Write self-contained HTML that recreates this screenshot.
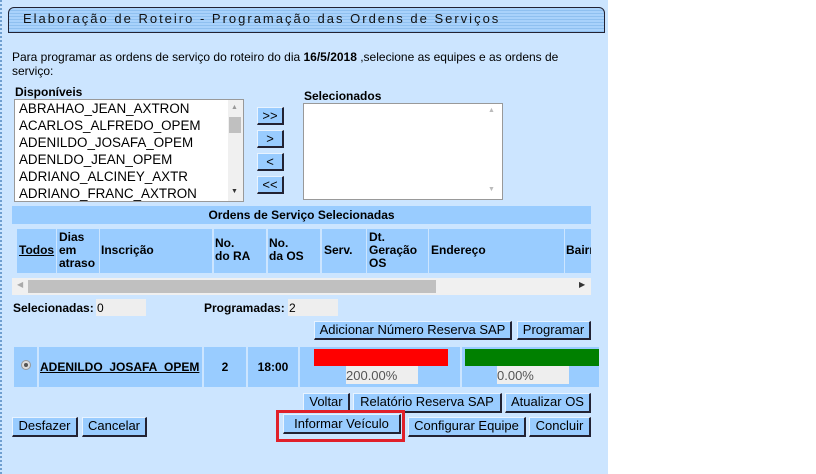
<!DOCTYPE html>
<html><head><meta charset="utf-8"><style>
*{margin:0;padding:0;box-sizing:border-box}
body{width:816px;height:474px;background:#fff;position:relative;overflow:hidden;font-family:"Liberation Sans",Arial,sans-serif;font-size:12px;color:#000}
.a{position:absolute}
#panel{left:0;top:0;width:608px;height:474px;background:#cce5ff;border-left:2px dotted #6f9fd0}
#hdr{left:8px;top:7px;width:597px;height:26px;border:1px solid #223;border-radius:6px 6px 0 0;background:repeating-linear-gradient(#a9d2fb 0 2px,#8fc0f0 2px 3px);font-size:13px;letter-spacing:2px;padding:3px 0 0 14px;color:#111}
.box{background:#fff;border:1px solid #999}
.btn{background:#99ccff;border-top:1px solid #e8f3ff;border-left:1px solid #e8f3ff;border-right:2px solid #223;border-bottom:2px solid #223;text-align:center;font-size:13px;line-height:16px}
.th{background:#99ccff;font-weight:bold;font-size:12px;line-height:13px;top:229px;height:44px;overflow:hidden;white-space:nowrap}
.li{font-size:13.4px;line-height:17px;left:4px}
.cell{background:#99ccff;font-weight:bold;font-size:12px}
</style></head><body>
<div id="panel" class="a"></div>
<div id="hdr" class="a">Elaboração de Roteiro - Programação das Ordens de Serviços</div>
<div class="a" style="left:12px;top:50px;width:560px;line-height:14px">Para programar as ordens de serviço do roteiro do dia <b>16/5/2018</b> ,selecione as equipes e as ordens de serviço:</div>
<div class="a" style="left:15px;top:85px;font-weight:bold">Disponíveis</div>
<div class="a box" style="left:14px;top:99px;width:230px;height:103px;overflow:hidden">
<div class="a li" style="top:0">ABRAHAO_JEAN_AXTRON</div>
<div class="a li" style="top:17px">ACARLOS_ALFREDO_OPEM</div>
<div class="a li" style="top:34px">ADENILDO_JOSAFA_OPEM</div>
<div class="a li" style="top:51px">ADENLDO_JEAN_OPEM</div>
<div class="a li" style="top:68px">ADRIANO_ALCINEY_AXTR</div>
<div class="a li" style="top:85px">ADRIANO_FRANC_AXTRON</div>
<div class="a" style="left:213px;top:0;width:15px;height:101px;background:#f0f0f0"></div>
<div class="a" style="left:214px;top:17px;width:12px;height:16px;background:#c0c0c0"></div>
<div class="a" style="left:216px;top:4px;font-size:7px;color:#999">▲</div>
<div class="a" style="left:216px;top:88px;font-size:7px;color:#333">▼</div>
</div>
<div class="a btn" style="left:257px;top:107px;width:27px;height:18px">&gt;&gt;</div>
<div class="a btn" style="left:257px;top:130px;width:27px;height:18px">&gt;</div>
<div class="a btn" style="left:257px;top:153px;width:27px;height:18px">&lt;</div>
<div class="a btn" style="left:257px;top:176px;width:27px;height:18px">&lt;&lt;</div>
<div class="a" style="left:304px;top:89px;font-weight:bold">Selecionados</div>
<div class="a box" style="left:303px;top:103px;width:200px;height:97px">
<div class="a" style="left:184px;top:3px;font-size:7px;color:#bbb">▲</div>
<div class="a" style="left:184px;top:82px;font-size:7px;color:#bbb">▼</div></div>
<div class="a th" style="left:12px;top:206px;width:579px;height:18px;text-align:center;line-height:18px">Ordens de Serviço Selecionadas</div>
<div class="a th" style="left:17px;width:39px;padding:15px 0 0 2px;text-decoration:underline">Todos</div>
<div class="a th" style="left:57px;width:42px;padding:2px 0 0 2px">Dias<br>em<br>atraso</div>
<div class="a th" style="left:100px;width:112px;padding:15px 0 0 1px">Inscrição</div>
<div class="a th" style="left:214px;width:52px;padding:8px 0 0 1px">No.<br>do RA</div>
<div class="a th" style="left:268px;width:52px;padding:8px 0 0 1px">No.<br>da OS</div>
<div class="a th" style="left:322px;width:44px;padding:15px 0 0 2px">Serv.</div>
<div class="a th" style="left:367px;width:61px;padding:2px 0 0 2px">Dt.<br>Geração<br>OS</div>
<div class="a th" style="left:429px;width:135px;padding:15px 0 0 2px">Endereço</div>
<div class="a th" style="left:565px;width:26px;padding:15px 0 0 1px">Bairro</div>
<div class="a" style="left:12px;top:278px;width:579px;height:17px;background:#f0f0f0"></div>
<div class="a" style="left:28px;top:280px;width:408px;height:13px;background:#c0c0c0"></div>
<div class="a" style="left:17px;top:280px;font-size:8px;color:#aaa">◀</div>
<div class="a" style="left:579px;top:280px;font-size:8px;color:#333">▶</div>
<div class="a" style="left:13px;top:301px;font-weight:bold">Selecionadas:</div>
<div class="a" style="left:96px;top:299px;width:50px;height:17px;background:#eee"></div>
<div class="a" style="left:97px;top:301px">0</div>
<div class="a" style="left:204px;top:301px;font-weight:bold">Programadas:</div>
<div class="a" style="left:288px;top:299px;width:50px;height:17px;background:#eee"></div>
<div class="a" style="left:289px;top:301px">2</div>
<div class="a btn" style="left:314px;top:321px;width:198px;height:19px">Adicionar Número Reserva SAP</div>
<div class="a btn" style="left:517px;top:321px;width:74px;height:19px">Programar</div>
<div class="a cell" style="left:14px;top:347px;width:23px;height:40px"></div>
<div class="a" style="left:21px;top:360px;width:10px;height:10px;border-radius:50%;background:#ddd;border:1px solid #999"><div class="a" style="left:2px;top:2px;width:4px;height:4px;border-radius:50%;background:#555"></div></div>
<div class="a cell" style="left:39px;top:347px;width:163px;height:40px;padding-top:13px;padding-left:1px;text-decoration:underline">ADENILDO_JOSAFA_OPEM</div>
<div class="a cell" style="left:204px;top:347px;width:42px;height:40px;padding-top:13px;text-align:center">2</div>
<div class="a cell" style="left:248px;top:347px;width:50px;height:40px;padding-top:13px;text-align:center">18:00</div>
<div class="a cell" style="left:300px;top:347px;width:160px;height:40px"></div>
<div class="a" style="left:314px;top:349px;width:134px;height:17px;background:#f00"></div>
<div class="a" style="left:346px;top:366px;width:72px;height:18px;background:#eee;font-size:13px;color:#555;padding:2px 0 0 0">200.00%</div>
<div class="a cell" style="left:462px;top:347px;width:137px;height:40px"></div>
<div class="a" style="left:465px;top:349px;width:134px;height:17px;background:#008000"></div>
<div class="a" style="left:497px;top:366px;width:72px;height:18px;background:#eee;font-size:13px;color:#555;padding:2px 0 0 0">0.00%</div>
<div class="a btn" style="left:303px;top:393px;width:47px;height:20px">Voltar</div>
<div class="a btn" style="left:353px;top:393px;width:149px;height:20px">Relatório Reserva SAP</div>
<div class="a btn" style="left:505px;top:393px;width:86px;height:20px">Atualizar OS</div>
<div class="a btn" style="left:12px;top:417px;width:66px;height:20px">Desfazer</div>
<div class="a btn" style="left:82px;top:417px;width:65px;height:20px">Cancelar</div>
<div class="a" style="left:276px;top:410px;width:129px;height:32px;border:3px solid #e0202a"></div>
<div class="a btn" style="left:283px;top:414px;width:118px;height:20px;line-height:18px">Informar Veículo</div>
<div class="a btn" style="left:408px;top:417px;width:118px;height:20px">Configurar Equipe</div>
<div class="a btn" style="left:529px;top:417px;width:62px;height:20px">Concluir</div>
</body></html>
